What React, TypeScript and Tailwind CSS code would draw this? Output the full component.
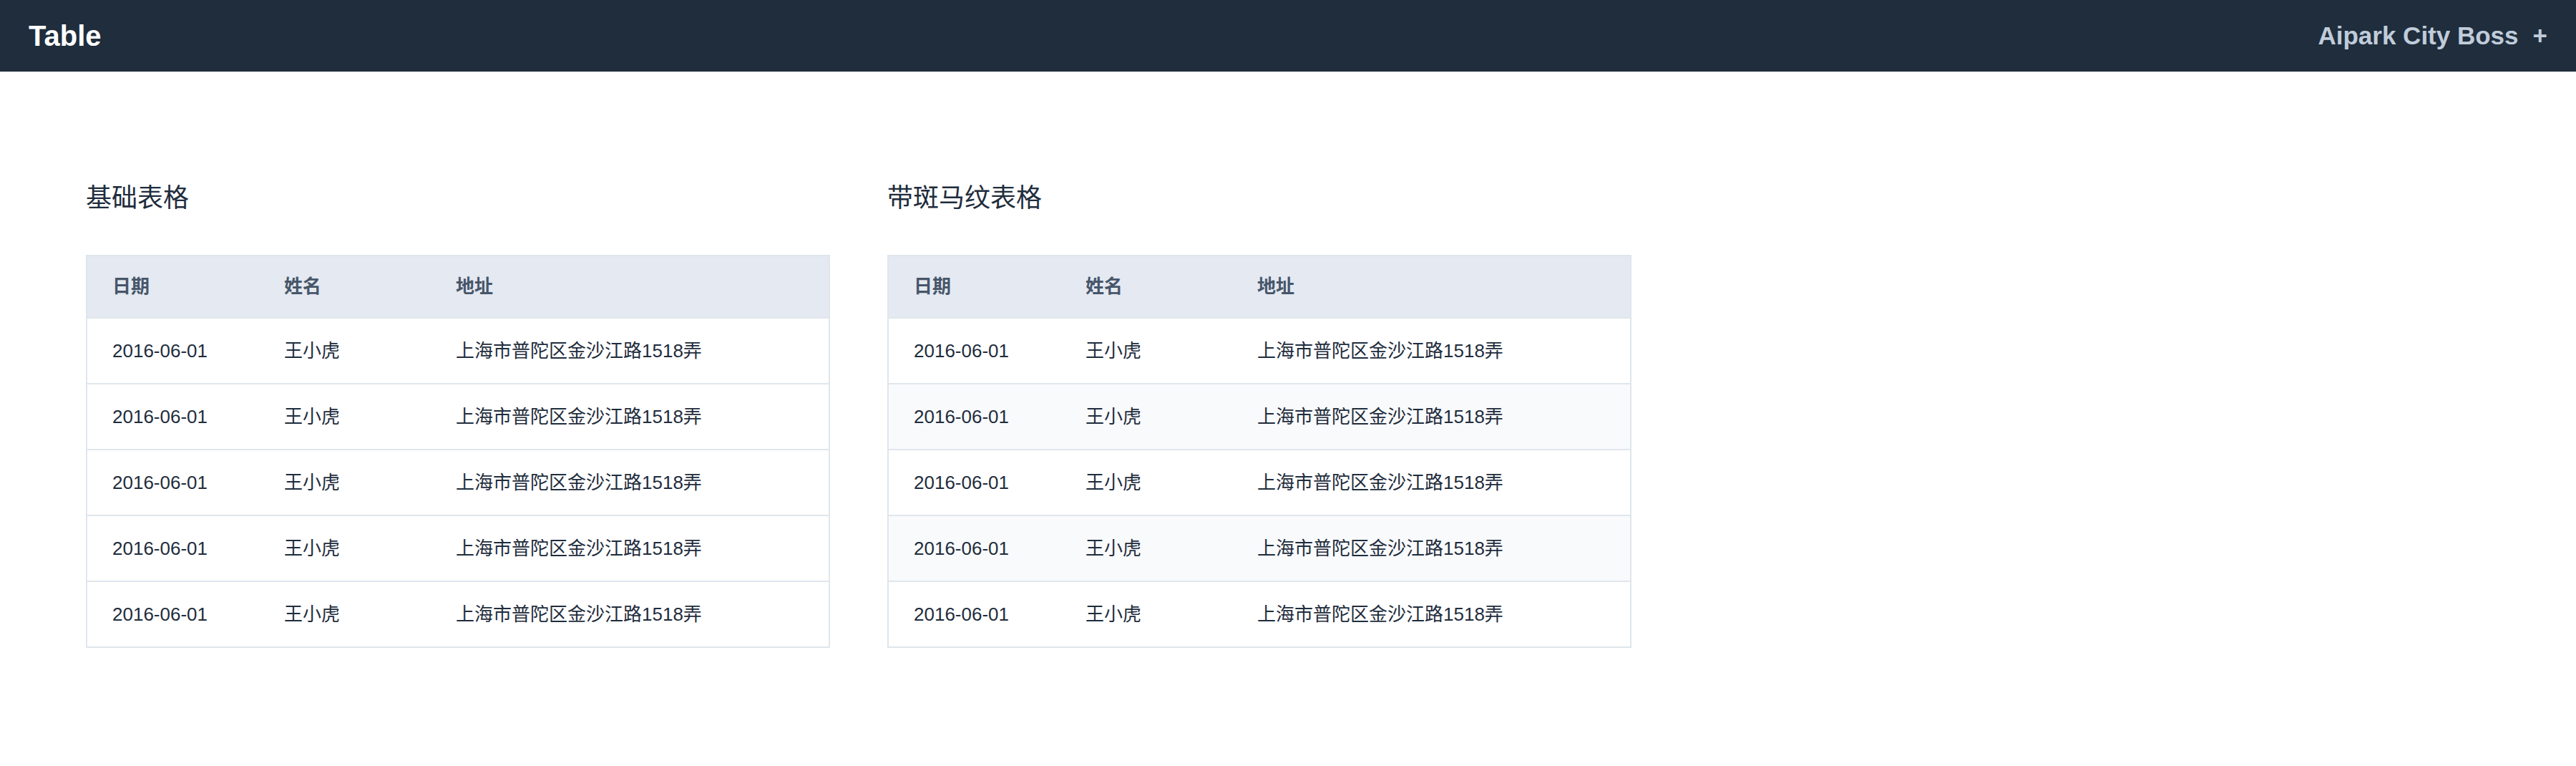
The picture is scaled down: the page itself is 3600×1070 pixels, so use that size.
import React from 'react';

const font = '"Liberation Sans", "Noto Sans CJK SC", Arial, sans-serif';

const rows = Array.from({ length: 5 }, () => ({
  date: '2016-06-01',
  name: '王小虎',
  address: '上海市普陀区金沙江路1518弄',
}));

// 表格组件
const DataTable: React.FC<{ title: string; stripe?: boolean }> = ({ title, stripe = false }) => {
  return (
    <div className="w-[1040px]">
      <h2 className="text-[36px] leading-[54px] font-normal text-[#1f2d3d] mb-[52px]">{title}</h2>
      <div className="border-2 border-[#dfe6ec]">
        <div className="grid grid-cols-[240px_240px_1fr] h-[87px] items-center bg-[#e4e9f2] border-b-2 border-[#dfe6ec] text-[26px] font-bold text-[#475669]">
          <div className="px-[35px]">日期</div>
          <div className="px-[35px]">姓名</div>
          <div className="px-[35px]">地址</div>
        </div>
        {rows.map((row, i) => (
          <div
            key={i}
            className={
              'grid grid-cols-[240px_240px_1fr] h-[92px] items-center text-[26px] text-[#1f2d3d] border-b-2 border-[#dfe6ec] last:h-[90px] last:border-b-0 ' +
              (stripe && i % 2 === 1 ? 'bg-[#f9fafc]' : 'bg-white')
            }
          >
            <div className="px-[35px]">{row.date}</div>
            <div className="px-[35px]">{row.name}</div>
            <div className="px-[35px]">{row.address}</div>
          </div>
        ))}
      </div>
    </div>
  );
};

const App: React.FC = () => {
  return (
    <div className="min-h-screen bg-white" style={{ fontFamily: font }}>
      {/* 顶部导航 */}
      <header className="h-[100px] bg-[#1f2d3d] flex items-center justify-between pl-10 pr-10">
        <div className="text-[40px] font-bold text-white">Table</div>
        <div className="flex items-center text-[35px] font-bold text-[#c0ccda]">
          <span>Aipark City Boss</span>
          <span className="ml-[20px]">+</span>
        </div>
      </header>

      <main className="pt-[150px] pl-[120px] flex gap-[80px]">
        <DataTable title="基础表格" />
        <DataTable title="带斑马纹表格" stripe />
      </main>
    </div>
  );
};

export default App;
